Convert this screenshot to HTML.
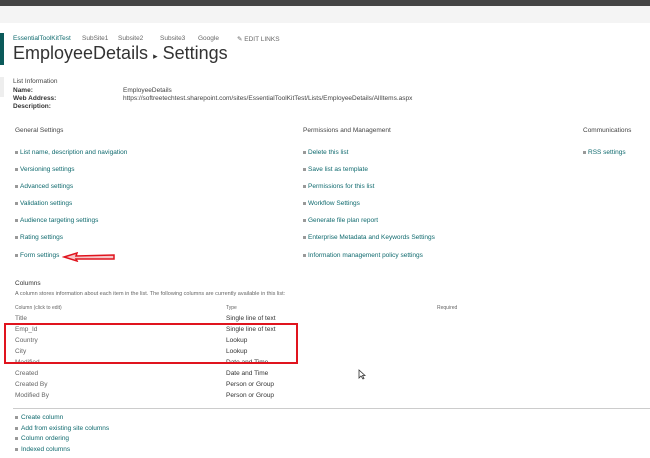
<!DOCTYPE html>
<html><head><style>
body{margin:0;width:650px;height:458px;background:#fff;position:relative;overflow:hidden;font-family:"Liberation Sans",sans-serif;font-size:6.5px;color:#444}
.a{position:absolute;white-space:nowrap}
.l{color:#0f6a6e}
.b{position:absolute;width:3px;height:3px;background:#999}
.g{color:#666}
.d{color:#333}
</style></head><body>
<div class="a" style="left:0;top:0;width:650px;height:6px;background:#444"></div>
<div class="a" style="left:0;top:6px;width:650px;height:17px;background:#f4f4f4"></div>
<div class="a" style="left:0;top:33px;width:4px;height:32px;background:#0b5a5a"></div>
<div class="a l" style="left:13px;top:35px">EssentialToolKitTest</div>
<div class="a g" style="left:82px;top:35px">SubSite1</div>
<div class="a g" style="left:118px;top:35px">Subsite2</div>
<div class="a g" style="left:160px;top:35px">Subsite3</div>
<div class="a g" style="left:198px;top:35px">Google</div>
<div class="a g" style="left:237px;top:35px">✎ EDIT LINKS</div>
<div class="a" style="left:13px;top:43px;font-size:18px;color:#333">EmployeeDetails <span style="font-size:9px">▸</span> Settings</div>
<div class="a" style="left:0;top:77px;width:4px;height:20px;background:#eee"></div>
<div class="a" style="left:13px;top:78px">List Information</div>
<div class="a d" style="left:13px;top:87px;font-weight:bold">Name:</div>
<div class="a d" style="left:13px;top:95px;font-weight:bold">Web Address:</div>
<div class="a d" style="left:13px;top:103px;font-weight:bold">Description:</div>
<div class="a" style="left:123px;top:87px">EmployeeDetails</div>
<div class="a" style="left:123px;top:95px">https://softreetechtest.sharepoint.com/sites/EssentialToolKitTest/Lists/EmployeeDetails/AllItems.aspx</div>
<div class="a" style="left:15px;top:127px">General Settings</div>
<div class="a" style="left:303px;top:127px">Permissions and Management</div>
<div class="a" style="left:583px;top:127px">Communications</div>
<div class="b" style="left:15px;top:151px"></div><div class="a l" style="left:20px;top:149px">List name, description and navigation</div>
<div class="b" style="left:15px;top:168px"></div><div class="a l" style="left:20px;top:166px">Versioning settings</div>
<div class="b" style="left:15px;top:185px"></div><div class="a l" style="left:20px;top:183px">Advanced settings</div>
<div class="b" style="left:15px;top:202px"></div><div class="a l" style="left:20px;top:200px">Validation settings</div>
<div class="b" style="left:15px;top:219px"></div><div class="a l" style="left:20px;top:217px">Audience targeting settings</div>
<div class="b" style="left:15px;top:236px"></div><div class="a l" style="left:20px;top:234px">Rating settings</div>
<div class="b" style="left:15px;top:254px"></div><div class="a l" style="left:20px;top:252px">Form settings</div>
<svg class="a" style="left:62px;top:252px" width="54" height="10"><path d="M2 5 L15 1 L14 4 L52 3 L52 7 L14 7 L15 9 Z" fill="#f7c6c8" stroke="#e0141e" stroke-width="1.5"/></svg>
<div class="b" style="left:303px;top:151px"></div><div class="a l" style="left:308px;top:149px">Delete this list</div>
<div class="b" style="left:303px;top:168px"></div><div class="a l" style="left:308px;top:166px">Save list as template</div>
<div class="b" style="left:303px;top:185px"></div><div class="a l" style="left:308px;top:183px">Permissions for this list</div>
<div class="b" style="left:303px;top:202px"></div><div class="a l" style="left:308px;top:200px">Workflow Settings</div>
<div class="b" style="left:303px;top:219px"></div><div class="a l" style="left:308px;top:217px">Generate file plan report</div>
<div class="b" style="left:303px;top:236px"></div><div class="a l" style="left:308px;top:234px">Enterprise Metadata and Keywords Settings</div>
<div class="b" style="left:303px;top:254px"></div><div class="a l" style="left:308px;top:252px">Information management policy settings</div>
<div class="b" style="left:583px;top:151px"></div><div class="a l" style="left:588px;top:149px">RSS settings</div>
<div class="a d" style="left:15px;top:280px">Columns</div>
<div class="a g" style="left:15px;top:291px;font-size:5.5px">A column stores information about each item in the list. The following columns are currently available in this list:</div>
<div class="a g" style="left:15px;top:305px;font-size:5px">Column (click to edit)</div>
<div class="a g" style="left:226px;top:305px;font-size:5px">Type</div>
<div class="a g" style="left:437px;top:305px;font-size:5px">Required</div>
<div class="a g" style="left:15px;top:315px">Title</div><div class="a d" style="left:226px;top:315px">Single line of text</div>
<div class="a g" style="left:15px;top:326px">Emp_Id</div><div class="a d" style="left:226px;top:326px">Single line of text</div>
<div class="a g" style="left:15px;top:337px">Country</div><div class="a d" style="left:226px;top:337px">Lookup</div>
<div class="a g" style="left:15px;top:348px">City</div><div class="a d" style="left:226px;top:348px">Lookup</div>
<div class="a g" style="left:15px;top:359px">Modified</div><div class="a d" style="left:226px;top:359px">Date and Time</div>
<div class="a g" style="left:15px;top:370px">Created</div><div class="a d" style="left:226px;top:370px">Date and Time</div>
<div class="a g" style="left:15px;top:381px">Created By</div><div class="a d" style="left:226px;top:381px">Person or Group</div>
<div class="a g" style="left:15px;top:392px">Modified By</div><div class="a d" style="left:226px;top:392px">Person or Group</div>
<div class="a" style="left:4px;top:323px;width:290px;height:37px;border:2px solid #e0141e"></div>
<svg class="a" style="left:358px;top:369px" width="8" height="11"><path d="M1 1 L1 9 L3 7 L5 10 L6 9.5 L4.5 6.5 L7 6.5 Z" fill="#fff" stroke="#333" stroke-width="0.8"/></svg>
<div class="a" style="left:13px;top:408px;width:637px;height:1px;background:#ccc"></div>
<div class="b" style="left:15px;top:416px"></div><div class="a l" style="left:21px;top:414px">Create column</div>
<div class="b" style="left:15px;top:427px"></div><div class="a l" style="left:21px;top:425px">Add from existing site columns</div>
<div class="b" style="left:15px;top:437px"></div><div class="a l" style="left:21px;top:435px">Column ordering</div>
<div class="b" style="left:15px;top:448px"></div><div class="a l" style="left:21px;top:446px">Indexed columns</div>
</body></html>
